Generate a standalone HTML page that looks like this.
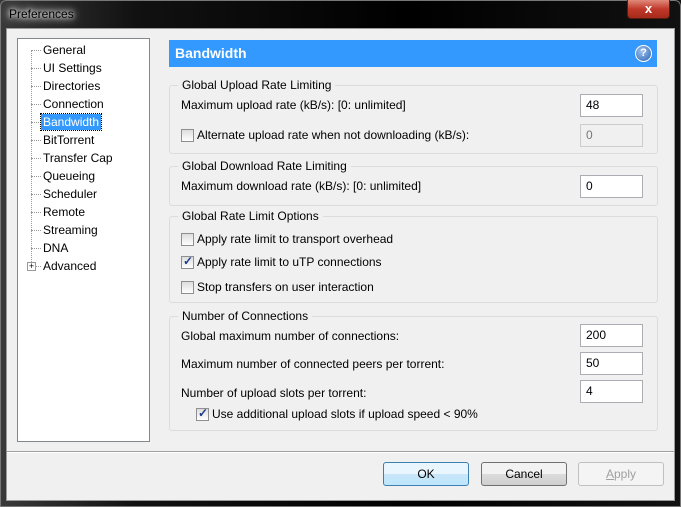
<!DOCTYPE html>
<html><head><style>
*{margin:0;padding:0;box-sizing:border-box}
body{width:681px;height:507px;background:linear-gradient(90deg,#3a3a3a,#111 20%,#000 60%,#111);font-family:"Liberation Sans",sans-serif;font-size:12px;color:#000;position:relative;overflow:hidden}
#frame{left:0;top:0;width:681px;height:507px;border:1px solid #777;border-radius:6px 6px 0 0}
.abs{position:absolute}
#title{left:9px;top:7px;color:#000;font-size:12px;text-shadow:0 0 4px #fff,0 0 8px #fff,0 0 10px #ddd}
#close{left:627px;top:0;width:43px;height:19px;background:linear-gradient(#e08a7a,#c0392b 50%,#a52a1a);border:1px solid #5a1a10;border-top:none;border-radius:0 0 4px 4px;color:#fff;text-align:center;font-weight:bold;font-size:13px;line-height:18px}
#client{left:7px;top:29px;width:667px;height:471px;background:#f0f0f0;outline:1px solid #9a9a9a}
#tree{left:17px;top:38px;width:133px;height:404px;background:#fff;border:1px solid #828790}
.ti{position:absolute;left:25px;height:16px;line-height:16px}
.dot{position:absolute;left:13px;width:10px;border-top:1px dotted #999}
#vline{position:absolute;left:13px;top:11px;height:216px;border-left:1px dotted #999}
#hdr{left:169px;top:40px;width:488px;height:27px;background:#3399ff;color:#fff;font-weight:bold;font-size:14px;line-height:26px;padding-left:6px}
#help{position:absolute;right:5px;top:5px;width:17px;height:17px;border-radius:50%;background:radial-gradient(circle at 40% 35%,#9fc4f0,#2a5fb0);border:1px solid #fff;color:#fff;font-size:11px;line-height:15px;text-align:center}
.grp{position:absolute;left:169px;width:489px;border:1px solid #dcdcdc;border-radius:3px}
.gt{position:absolute;left:8px;top:-8px;background:#f0f0f0;padding:0 4px}
.lbl{position:absolute;left:181px}
.inp{position:absolute;left:580px;width:63px;height:23px;background:#fff;border:1px solid #abadb3;padding-left:5px;line-height:21px}
.cb{position:absolute;width:13px;height:13px;border:1px solid #8f8f8f;background:linear-gradient(#ddd,#fff)}
.cb.on::after{content:"✓";position:absolute;left:1px;top:-3px;font-size:12px;color:#1e3a8a;font-weight:bold}
.btn{position:absolute;top:462px;width:86px;height:24px;border:1px solid #707070;border-radius:3px;background:linear-gradient(#f2f2f2 50%,#dcdcdc 50%,#cfcfcf);text-align:center;line-height:22px}
</style></head><body>
<div class="abs" id="frame"></div>
<div class="abs" id="title">Preferences</div>
<div class="abs" id="close">x</div>
<div class="abs" id="client"></div>
<div class="abs" id="tree">
<div id="vline"></div>
<div class="dot" style="top:11px"></div><div class="ti" style="top:3px">General</div>
<div class="dot" style="top:29px"></div><div class="ti" style="top:21px">UI Settings</div>
<div class="dot" style="top:47px"></div><div class="ti" style="top:39px">Directories</div>
<div class="dot" style="top:65px"></div><div class="ti" style="top:57px">Connection</div>
<div class="dot" style="top:83px"></div><div class="ti" style="top:75px;background:#3399ff;color:#fff;padding:0 2px;left:23px;outline:1px dotted #000">Bandwidth</div>
<div class="dot" style="top:101px"></div><div class="ti" style="top:93px">BitTorrent</div>
<div class="dot" style="top:119px"></div><div class="ti" style="top:111px">Transfer Cap</div>
<div class="dot" style="top:137px"></div><div class="ti" style="top:129px">Queueing</div>
<div class="dot" style="top:155px"></div><div class="ti" style="top:147px">Scheduler</div>
<div class="dot" style="top:173px"></div><div class="ti" style="top:165px">Remote</div>
<div class="dot" style="top:191px"></div><div class="ti" style="top:183px">Streaming</div>
<div class="dot" style="top:209px"></div><div class="ti" style="top:201px">DNA</div>
<div class="dot" style="top:227px"></div><div class="ti" style="top:219px">Advanced</div>
<div style="position:absolute;left:9px;top:223px;width:9px;height:9px;border:1px solid #999;background:#fff;font-size:9px;line-height:7px;text-align:center">+</div>
</div>
<div class="abs" id="hdr">Bandwidth<div id="help">?</div></div>

<div class="grp" style="top:85px;height:69px"><div class="gt">Global Upload Rate Limiting</div></div>
<div class="lbl" style="top:98px">Maximum upload rate (kB/s): [0: unlimited]</div>
<div class="inp" style="top:94px">48</div>
<div class="cb" style="left:181px;top:129px"></div>
<div class="lbl" style="left:197px;top:128px">Alternate upload rate when not downloading (kB/s):</div>
<div class="inp" style="top:124px;background:#f0f0f0;color:#777;border-color:#ccc">0</div>

<div class="grp" style="top:166px;height:40px"><div class="gt">Global Download Rate Limiting</div></div>
<div class="lbl" style="top:179px">Maximum download rate (kB/s): [0: unlimited]</div>
<div class="inp" style="top:175px">0</div>

<div class="grp" style="top:216px;height:87px"><div class="gt">Global Rate Limit Options</div></div>
<div class="cb" style="left:181px;top:233px"></div><div class="lbl" style="left:197px;top:232px">Apply rate limit to transport overhead</div>
<div class="cb on" style="left:181px;top:256px"></div><div class="lbl" style="left:197px;top:255px">Apply rate limit to uTP connections</div>
<div class="cb" style="left:181px;top:281px"></div><div class="lbl" style="left:197px;top:280px">Stop transfers on user interaction</div>

<div class="grp" style="top:316px;height:115px"><div class="gt">Number of Connections</div></div>
<div class="lbl" style="top:329px">Global maximum number of connections:</div>
<div class="inp" style="top:324px">200</div>
<div class="lbl" style="top:357px">Maximum number of connected peers per torrent:</div>
<div class="inp" style="top:352px">50</div>
<div class="lbl" style="top:386px">Number of upload slots per torrent:</div>
<div class="inp" style="top:380px">4</div>
<div class="cb on" style="left:196px;top:408px"></div><div class="lbl" style="left:212px;top:407px">Use additional upload slots if upload speed &lt; 90%</div>

<div class="abs" style="left:7px;top:451px;width:667px;border-top:1px solid #a0a0a0;border-bottom:1px solid #fff"></div>
<div class="btn" style="left:383px;border-color:#3c7fb1;background:linear-gradient(#eaf6fd 50%,#c9e6f8 50%,#bee6fd)">OK</div>
<div class="btn" style="left:481px">Cancel</div>
<div class="btn" style="left:578px;border-color:#c0c0c0;background:#f4f4f4;color:#a0a0a0"><u>A</u>pply</div>
</body></html>
